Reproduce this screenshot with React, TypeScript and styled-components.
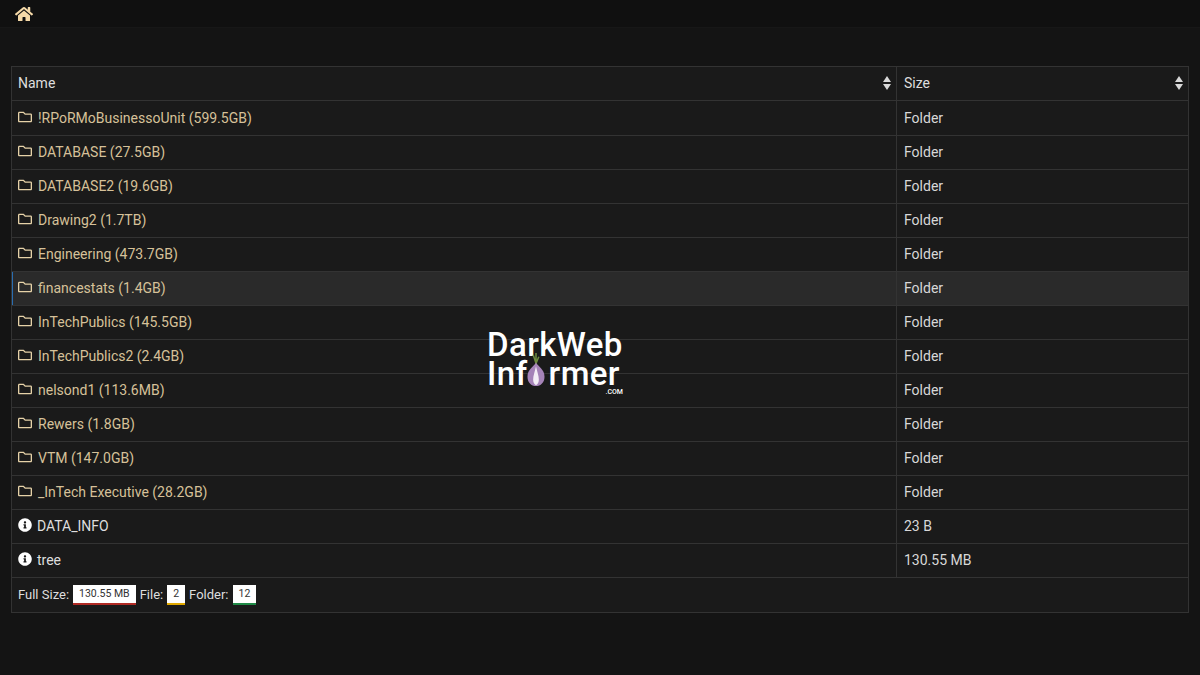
import styled, { createGlobalStyle } from 'styled-components'
import { FaHome, FaInfoCircle, FaRegFolder } from 'react-icons/fa'

const GlobalStyle = createGlobalStyle`
  html, body {
    margin: 0;
    padding: 0;
    background: #141414;
    font-family: Roboto, "Liberation Sans", Arial, sans-serif;
    overflow: hidden;
  }
`

const Page = styled.div`
  position: relative;
  width: 1200px;
  height: 675px;
  background: #141414;
`

const TopBar = styled.header`
  display: flex;
  align-items: center;
  height: 27px;
  padding-left: 15px;
  background: #101010;
  border-bottom: 1px solid #171717;
  color: #f5d9a8;
`

const Main = styled.main`
  padding: 38px 11px 0;
`

const Table = styled.table`
  width: 1178px;
  table-layout: fixed;
  border-collapse: collapse;
  background: #1a1a1a;
  border: 1px solid #333;
  font-size: 14px;
`

const HeadCell = styled.th`
  position: relative;
  box-sizing: border-box;
  height: 34px;
  padding: 0 6px 2px;
  border: 1px solid #333;
  color: #dedede;
  font-weight: 400;
  text-align: left;

  & + & {
    padding-left: 7px;
  }
`

const SortArrows = styled.svg`
  position: absolute;
  right: 4px;
  top: 8px;
`

const Row = styled.tr<{ $active?: boolean }>`
  height: 34px;
  background: ${({ $active }) => ($active ? '#2a2a2a' : 'transparent')};

  &:first-child {
    height: 35px;
  }

  &:first-child td {
    padding-bottom: 0;
  }
`

const NameCell = styled.td<{ $active?: boolean }>`
  padding: 0 6px 2px;
  border: 1px solid #333;
  box-shadow: ${({ $active }) => ($active ? 'inset 1px 0 0 #2a6db0' : 'none')};
`

const SizeCell = styled.td`
  padding: 0 7px 2px;
  border: 1px solid #333;
  color: #d8d8d8;
`

const FolderLink = styled.span`
  display: flex;
  align-items: center;
  gap: 6px;
  color: #d6c199;

  svg {
    width: 14px;
    height: 14px;
    color: #e6d2a8;
    margin-top: -2px;
  }
`

const FileLink = styled.span`
  display: flex;
  align-items: center;
  gap: 5px;
  color: #dedede;

  svg {
    width: 14px;
    height: 14px;
    color: #fff;
    margin-top: -2px;
  }
`

const FooterCell = styled.td`
  height: 35px;
  box-sizing: border-box;
  padding: 0 6px 2px;
  border: 1px solid #333;
  color: #dedede;
  font-size: 13px;
`

const Stats = styled.div`
  display: flex;
  align-items: center;
  gap: 4px;
`

const Badge = styled.span<{ $color: string }>`
  box-sizing: border-box;
  display: inline-block;
  height: 20px;
  margin-top: 2px;
  padding: 0 6px;
  background: #fff;
  border-bottom: 2px solid ${({ $color }) => $color};
  color: #333;
  font-size: 10.5px;
  line-height: 17px;
`

const Watermark = styled.div`
  position: absolute;
  left: 487px;
  top: 330px;
  width: 137px;
  height: 66px;
  color: #fff;
  font-family: Roboto, "Liberation Sans", sans-serif;
  font-size: 33px;
  font-weight: 500;
  line-height: 29px;
  letter-spacing: 0.4px;
  pointer-events: none;
`

const MarkLine = styled.div`
  display: flex;
  white-space: nowrap;
`

const OnionSlot = styled.span`
  flex: none;
  width: 21px;
`

const Onion = styled.svg`
  position: absolute;
  left: 38px;
  top: 22px;
`

const DotCom = styled.div`
  position: absolute;
  right: 1px;
  top: 58px;
  font-size: 7px;
  line-height: 8px;
  letter-spacing: 0;
`

const FOLDERS = [
  '!RPoRMoBusinessoUnit (599.5GB)',
  'DATABASE (27.5GB)',
  'DATABASE2 (19.6GB)',
  'Drawing2 (1.7TB)',
  'Engineering (473.7GB)',
  'financestats (1.4GB)',
  'InTechPublics (145.5GB)',
  'InTechPublics2 (2.4GB)',
  'nelsond1 (113.6MB)',
  'Rewers (1.8GB)',
  'VTM (147.0GB)',
  '_InTech Executive (28.2GB)',
]

const FILES = [
  { name: 'DATA_INFO', size: '23 B' },
  { name: 'tree', size: '130.55 MB' },
]

function Sort() {
  return (
    <SortArrows width="10" height="16" viewBox="0 0 10 16">
      <path d="M5 1 9 7H1z M1 9h8l-4 6z" fill="#d8d8d8" />
    </SortArrows>
  )
}

export default function App() {
  return (
    <Page>
      <GlobalStyle />
      <TopBar>
        <FaHome size={18} />
      </TopBar>
      <Main>
        <Table>
          <colgroup>
            <col width="885" />
            <col />
          </colgroup>
          <thead>
            <tr>
              <HeadCell>
                Name
                <Sort />
              </HeadCell>
              <HeadCell>
                Size
                <Sort />
              </HeadCell>
            </tr>
          </thead>
          <tbody>
            {FOLDERS.map((folder) => {
              const active = folder.startsWith('financestats')
              return (
                <Row key={folder} $active={active}>
                  <NameCell $active={active}>
                    <FolderLink>
                      <FaRegFolder />
                      {folder}
                    </FolderLink>
                  </NameCell>
                  <SizeCell>Folder</SizeCell>
                </Row>
              )
            })}
            {FILES.map((file) => (
              <Row key={file.name}>
                <NameCell>
                  <FileLink>
                    <FaInfoCircle />
                    {file.name}
                  </FileLink>
                </NameCell>
                <SizeCell>{file.size}</SizeCell>
              </Row>
            ))}
          </tbody>
          <tfoot>
            <tr>
              <FooterCell colSpan={2}>
                <Stats>
                  Full Size: <Badge $color="#b02a24">130.55 MB</Badge>
                  File: <Badge $color="#e0a800">2</Badge>
                  Folder: <Badge $color="#1f8a46">12</Badge>
                </Stats>
              </FooterCell>
            </tr>
          </tfoot>
        </Table>
      </Main>
      <Watermark>
        <MarkLine>DarkWeb</MarkLine>
        <MarkLine>
          Inf
          <OnionSlot />
          rmer
        </MarkLine>
        <Onion width="22" height="36" viewBox="0 0 22 38">
          <path d="M11 1v12M11 12 8 3M11 12l3-7" stroke="#6d8a3e" strokeWidth="1.6" fill="none" />
          <path d="M11 11c2 4 9 7 9 15 0 6-4 10-9 10S2 32 2 26c0-8 7-11 9-15z" fill="#a583b8" />
          <path d="M11 15c1 5 3 10 3 14 0 3-1 5-3 6-2-1-3-3-3-6 0-4 2-9 3-14z" fill="#f4eef6" />
        </Onion>
        <DotCom>.COM</DotCom>
      </Watermark>
    </Page>
  )
}
